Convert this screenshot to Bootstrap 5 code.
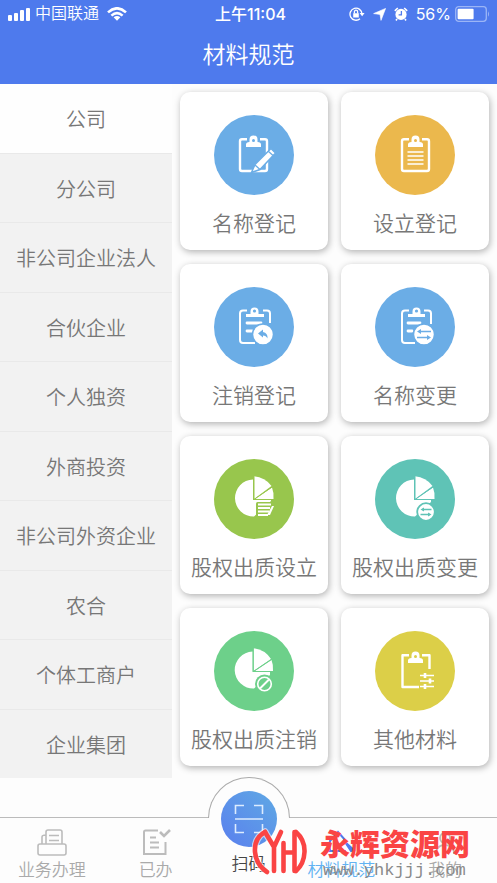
<!DOCTYPE html>
<html lang="zh-CN">
<head>
<meta charset="utf-8">
<meta name="viewport" content="width=device-width, initial-scale=1">
<title>材料规范</title>
<link href="https://cdn.jsdelivr.net/npm/bootstrap@5.3.0/dist/css/bootstrap.min.css" rel="stylesheet">
<style>
body{font-family:"Liberation Sans","Noto Sans CJK SC",sans-serif;font-weight:350;background:#fdfdfd;color:#777}
svg{display:block}
.top-area{background:#4e7aed;color:#fff}
.status-line{height:28px;font-size:16px;line-height:28px;padding:0 7px 0 8px;font-weight:350}
.clock{font-family:Inter,"Noto Sans CJK SC",sans-serif;font-weight:500}
.charge{font-family:Inter,sans-serif;font-weight:400}
.page-title{font-size:23px;line-height:28px;padding:13px 0 15px;font-weight:350}
.side-nav{width:172px;flex:none;background:#f2f2f2}
.side-nav .list-group-item{background:#f2f2f2;color:#777;font-size:20px;line-height:28px;border:0;border-bottom:1px solid #e9e9e9;padding:4px 0 0}
.side-nav .list-group-item.active{background:#fefefe}
.tiles{display:grid;grid-template-columns:1fr 1fr;gap:14px 13px;padding:8px 8px 12px}
.tile{border:0;border-radius:10px;background:#fff;box-shadow:1px 2px 7px rgba(0,0,0,.3);padding:23px 0 14px;color:#777;font-size:21px;line-height:24px;gap:17px}
.tile:hover{color:#555}
.disc{width:80px;height:80px;border-radius:50%}
.blue{background:#6bade6;color:#6bade6}.amber{background:#ebb84d;color:#ebb84d}
.lime{background:#98c64d;color:#98c64d}.teal{background:#5fc3b6;color:#5fc3b6}
.mint{background:#6dd08a;color:#6dd08a}.gold{background:#dccf48;color:#dccf48}
.tabs{margin-top:39px;border-top:1px solid #bbb;height:65px}
.tab{flex:1 1 0;color:#aaa;font-size:17px;line-height:20px;padding-top:9px;gap:5px}
.tab.current{color:#62b2f2}
.tab-scan{width:82px;flex:none;color:#444;font-size:17px;line-height:20px;margin-top:-41px;gap:8px}
.arch{border:1px solid #aaa;border-bottom:0;border-radius:41px 41px 0 0;height:41px;background:#fdfdfd}
.scan-disc{width:56px;height:56px;border-radius:50%;background:linear-gradient(45deg,#5a7fee,#5fa9e4);margin-top:-35px}
.brand{right:27px;bottom:3px;color:#fa4444;gap:12px}
.brand-name{font-size:30px;line-height:34px;font-weight:900}
.brand-url{font-family:"Liberation Mono",monospace;font-size:17px;line-height:18px;color:#8a8a8a;font-weight:400;padding-left:3px}
</style>
</head>
<body>
<div class="d-flex flex-column min-vh-100 position-relative overflow-hidden">
<header class="top-area">
<div class="status-line d-flex align-items-center position-relative">
<div class="d-flex align-items-center gap-1">
<svg width="23" height="14" viewBox="0 0 23 14" fill="#fff"><rect y="8" width="4" height="6" rx="1"/><rect x="6" y="6" width="4" height="8" rx="1"/><rect x="12" y="3" width="4" height="11" rx="1"/><rect x="18" y="1" width="4" height="13" rx="1"/></svg>
<span>中国联通</span>
<svg class="ms-1" width="20" height="14" viewBox="0 0 20 14" fill="none" stroke="#fff" stroke-width="2.6"><path d="M1 5.4Q10-2.8 19 5.4M4.4 8.6Q10 3.6 15.6 8.6"/><path fill="#fff" stroke="none" d="M6.6 10.3Q10 7.8 13.4 10.3L10 13.8z"/></svg>
</div>
<div class="clock position-absolute start-50 translate-middle-x ps-1">上午11:04</div>
<div class="d-flex align-items-center ms-auto">
<svg width="16" height="14" viewBox="0 0 16 14" fill="none" stroke="#fff" stroke-width="1.3"><path d="M11 11.7A6 6 0 1 1 13 7"/><path fill="#fff" stroke="none" d="M10.6 6h5l-2.5 3.2zM4.2 6.2h5.6v4.2H4.2z"/><path d="M5.4 6.5V4.8a1.6 1.6 0 0 1 3.2 0v1.7"/></svg>
<svg class="ms-2" width="13" height="13" viewBox="0 0 13 13" fill="#fff"><path d="M12.6.4 8 12.4 7 6.4.6 5.6z" stroke="#fff" stroke-width=".6"/></svg>
<svg class="ms-2" width="14" height="14" viewBox="0 0 14 14"><circle cx="7" cy="7.4" r="5.6" fill="#fff"/><path d="M.8 3.8 3.8 1M13.2 3.8l-3-2.8M3 12l-1 1.5M11 12l1 1.5" stroke="#fff" stroke-width="1.6"/><path d="M7.4 4v3.8H4.6" stroke="#4e7aed" stroke-width="1.3" fill="none"/></svg>
<span class="charge ms-2">56%</span>
<svg class="ms-1" width="35" height="16" viewBox="0 0 35 16"><rect x=".7" y=".7" width="30.6" height="14.6" rx="3" fill="none" stroke="#9bb5f6" stroke-width="1.3"/><rect x="2.6" y="2.8" width="16" height="10.4" rx="1" fill="#fff"/><path d="M33 5.2q2 2.8 0 5.6z" fill="#9bb5f6"/></svg>
</div>
</div>
<h1 class="page-title text-center m-0">材料规范</h1>
</header>
<main class="d-flex">
<nav class="side-nav list-group list-group-flush rounded-0" aria-label="企业类型">
<a href="#" class="list-group-item active flex-fill d-flex align-items-center justify-content-center" aria-current="true">公司</a>
<a href="#" class="list-group-item flex-fill d-flex align-items-center justify-content-center">分公司</a>
<a href="#" class="list-group-item flex-fill d-flex align-items-center justify-content-center">非公司企业法人</a>
<a href="#" class="list-group-item flex-fill d-flex align-items-center justify-content-center">合伙企业</a>
<a href="#" class="list-group-item flex-fill d-flex align-items-center justify-content-center">个人独资</a>
<a href="#" class="list-group-item flex-fill d-flex align-items-center justify-content-center">外商投资</a>
<a href="#" class="list-group-item flex-fill d-flex align-items-center justify-content-center">非公司外资企业</a>
<a href="#" class="list-group-item flex-fill d-flex align-items-center justify-content-center">农合</a>
<a href="#" class="list-group-item flex-fill d-flex align-items-center justify-content-center">个体工商户</a>
<a href="#" class="list-group-item flex-fill d-flex align-items-center justify-content-center">企业集团</a>
</nav>
<section class="tiles flex-grow-1">
<a href="#" class="tile card align-items-center text-decoration-none text-nowrap"><span class="disc blue">
<svg width="80" height="80" viewBox="0 0 80 80" fill="none"><path d="M33 24.300H28q-2 0-2 2V54q0 2 2 2H51q2 0 2-2V26.300q0-2-2-2H46" stroke="#fff" stroke-width="2.400"/><path d="M32 32v-2.500q0-2.500 3.500-2.500V24.500a4 4 0 0 1 8 0V27q3.500 0 3.500 2.500v2.500z" fill="#fff"/><circle cx="39.500" cy="25.500" r="1.500" fill="currentColor"/><path d="M37.500 57.500 41 49.500 57 33.500 61.500 38 46 54.500z" fill="#fff" stroke="currentColor" stroke-width="1.500"/><path d="m41 50 5 4.500M54 36l5 4.500" stroke="currentColor" stroke-width="1.300"/></svg></span><span>名称登记</span></a>
<a href="#" class="tile card align-items-center text-decoration-none text-nowrap"><span class="disc amber">
<svg width="80" height="80" viewBox="0 0 80 80" fill="none"><path d="M34 24.300H29q-2 0-2 2V54q0 2 2 2H52q2 0 2-2V26.300q0-2-2-2H47" stroke="#fff" stroke-width="2.400"/><path d="M33 32v-2.500q0-2.500 3.500-2.500V24.500a4 4 0 0 1 8 0V27q3.500 0 3.500 2.500v2.500z" fill="#fff"/><circle cx="40.500" cy="25.500" r="1.500" fill="currentColor"/><path d="M32.500 37h16M32.500 41h16M32.500 45h16M32.500 49h16" stroke="#fff" stroke-width="1.400"/></svg></span><span>设立登记</span></a>
<a href="#" class="tile card align-items-center text-decoration-none text-nowrap"><span class="disc blue">
<svg width="80" height="80" viewBox="0 0 80 80" fill="none"><path d="M33 23.500H29q-3 0-3 3V53q0 3 3 3H41M49 23.500h4q3 0 3 3V36" stroke="#fff" stroke-width="2"/><path d="M32 30v-3h4.500v-2.500a4 4 0 0 1 8 0V27H50v3z" fill="#fff"/><circle cx="40.500" cy="24" r="1.600" fill="currentColor"/><path d="M33 36h14M33 44h5" stroke="#fff" stroke-width="2.800" stroke-linecap="round"/><circle cx="49" cy="47.500" r="10.500" fill="#fff" stroke="currentColor" stroke-width="1.500"/><path d="m44 46.500 5-4v2.500q5 1 4.500 6.500-1.500-3-4.500-3v2z" fill="currentColor"/></svg></span><span>注销登记</span></a>
<a href="#" class="tile card align-items-center text-decoration-none text-nowrap"><span class="disc blue">
<svg width="80" height="80" viewBox="0 0 80 80" fill="none"><path d="M34 23.500H30q-3 0-3 3V53q0 3 3 3H40M49 23.500h4q3 0 3 3V37" stroke="#fff" stroke-width="2"/><path d="M33 30v-3h4.500v-2.500a4 4 0 0 1 8 0V27H50v3z" fill="#fff"/><circle cx="41.500" cy="24" r="1.600" fill="currentColor"/><path d="M33 36h12M33 44h4" stroke="#fff" stroke-width="2.800" stroke-linecap="round"/><circle cx="49" cy="47.500" r="10.500" fill="#fff" stroke="currentColor" stroke-width="1.500"/><path d="M56 44.500H44M42 50.500h12" stroke="currentColor" stroke-width="1.600"/><path d="m42 44.500 4-2.500v5zM56 50.500 52 48v5z" fill="currentColor"/></svg></span><span>名称变更</span></a>
<a href="#" class="tile card align-items-center text-decoration-none text-nowrap"><span class="disc lime">
<svg width="80" height="80" viewBox="0 0 80 80" fill="none"><path d="M39 20.500A18.500 18.500 0 1 0 40 57.500L57 42V41H39z" fill="#fff"/><path d="M40 17.200A24 24 0 0 1 57.500 27L40 40z" fill="#fff"/><path d="M58 28.500q2 5 1.500 11.500H41z" fill="#fff"/><path d="M40 17v23.500h20M40 40.500 58 28" stroke="currentColor" stroke-width="1"/><path d="M42 60V44.500q0-1.500 1.500-1.500H61v17z" fill="currentColor"/><path d="M44 45.500h13M44 49h12M44 52.500h11M44 56h10" stroke="#fff" stroke-width="1.800"/><path d="m58 47-5 9h3l4-9z" fill="#fff"/></svg></span><span>股权出质设立</span></a>
<a href="#" class="tile card align-items-center text-decoration-none text-nowrap"><span class="disc teal">
<svg width="80" height="80" viewBox="0 0 80 80" fill="none"><path d="M39 20.500A18.500 18.500 0 1 0 40 57.500L56 43V41H39z" fill="#fff"/><path d="M40 17.200A24 24 0 0 1 57.500 27L40 40z" fill="#fff"/><path d="M58 28.500q2 5 1.500 11.500H41z" fill="#fff"/><path d="M40 17v23.500h20M40 40.500 58 28" stroke="currentColor" stroke-width="1"/><circle cx="51" cy="53" r="8.800" fill="#fff" stroke="currentColor" stroke-width="1.800"/><path d="M56.500 50.500H47M45.500 55.500H55" stroke="currentColor" stroke-width="1.500"/><path d="m45.500 50.500 3.500-2v4zM56.500 55.500 53 53.500v4z" fill="currentColor"/></svg></span><span>股权出质变更</span></a>
<a href="#" class="tile card align-items-center text-decoration-none text-nowrap"><span class="disc mint">
<svg width="80" height="80" viewBox="0 0 80 80" fill="none"><path d="M38.500 20.500A18.500 18.500 0 1 0 40 57.500L56 44V41H38.500z" fill="#fff"/><path d="M39.500 17.200A24 24 0 0 1 57 28L39.500 40z" fill="#fff"/><path d="M57.500 29q2 5 1.500 11H41z" fill="#fff"/><path d="M39.300 17v23.500H60M39.300 40.500 58 28" stroke="currentColor" stroke-width="1"/><circle cx="50.500" cy="53" r="9.500" fill="currentColor"/><circle cx="50.500" cy="53" r="6.800" stroke="#fff" stroke-width="1.600"/><path d="m46 57.500 9-9" stroke="#fff" stroke-width="2"/></svg></span><span>股权出质注销</span></a>
<a href="#" class="tile card align-items-center text-decoration-none text-nowrap"><span class="disc gold">
<svg width="80" height="80" viewBox="0 0 80 80" fill="none"><path d="M34 24.300H27.500V56H44M47 24.300h7.500V38" stroke="#fff" stroke-width="2.400" stroke-linejoin="round"/><path d="M33 32v-2.500q0-2.500 3.500-2.500V24.500a4 4 0 0 1 8 0V27q3.500 0 3.500 2.500v2.500z" fill="#fff"/><circle cx="40.500" cy="25.500" r="1.500" fill="currentColor"/><path d="M45 44.500h14M45 50h14M45 55.500h14" stroke="#fff" stroke-width="1.700"/><path d="M50 42v5M55 47.500v5M50 53v5" stroke="#fff" stroke-width="2.600"/></svg></span><span>其他材料</span></a>
</section>
</main>
<footer class="tabs d-flex">
<a href="#" class="tab d-flex flex-column align-items-center text-decoration-none">
<svg width="32" height="29" viewBox="0 0 32 29" fill="none" stroke="#bcbcbc" stroke-width="1.600"><rect x="2" y="17" width="28" height="11" rx="2"/><path d="M10 17V5q0-2 2-2h12q2 0 2 2v12M6 17V10q0-2 4-2M13 8.500h10M13 13.500h10"/></svg><span>业务办理</span></a>
<a href="#" class="tab d-flex flex-column align-items-center text-decoration-none">
<svg width="32" height="29" viewBox="0 0 32 29" fill="none" stroke="#bcbcbc" stroke-width="2"><path d="M18 3.500H5.500Q4 3.500 4 5v22h21.500V15M10 10.500h6M10 15.500h9M10 20.500h9"/><path stroke-width="2.600" d="m20 5 4 4 6-6"/></svg><span>已办</span></a>
<a href="#" class="tab-scan d-flex flex-column align-items-center text-decoration-none">
<span class="arch w-100"></span>
<span class="scan-disc"><svg width="56" height="56" viewBox="0 0 56 56" fill="none" stroke="#dcecff" stroke-width="1.600"><path d="M14.500 23v-8.500H23M33 14.500h8.500V23M14.500 33v8.500H23M33 41.500h8.500V33M14 28h28"/></svg></span>
<span>扫码</span></a>
<a href="#" class="tab current d-flex flex-column align-items-center text-decoration-none" aria-current="page">
<svg width="32" height="29" viewBox="0 0 32 29" fill="none" stroke="#4e7aed" stroke-width="2"><path d="M5 24V14l8-9 8 9M2 24h19"/><path fill="#4e7aed" d="m20 15 9 8-3 1z"/></svg><span>材料规范</span></a>
<a href="#" class="tab d-flex flex-column align-items-center text-decoration-none">
<svg width="32" height="29" viewBox="0 0 32 29" fill="none" stroke="#bcbcbc" stroke-width="1.800"><circle cx="16" cy="11" r="5"/><path d="M7 27q0-9 9-9t9 9"/></svg><span>我的</span></a>
</footer>
<div class="brand position-absolute d-flex align-items-start pe-none">
<svg width="56" height="48" viewBox="0 0 56 48" fill="none" stroke-linecap="round"><g id="yh"><path d="M13 4Q2 10 3 24q1 13 12 20M44 4Q53 12 52.500 24T44 43"/><path d="m13 4 9 15v24M29 4 22 19M31.500 15v28M42.500 4v39M32 24.500h10"/></g><use href="#yh" stroke="#fff" stroke-width="7" opacity=".6"/><use href="#yh" stroke="#fa4444" stroke-width="4.600"/></svg>
<div class="d-flex flex-column"><span class="brand-name">永辉资源网</span><span class="brand-url">www.yhkjjj.com</span></div>
</div>
</div>
<script src="https://cdn.jsdelivr.net/npm/bootstrap@5.3.0/dist/js/bootstrap.bundle.min.js"></script>
</body>
</html>
